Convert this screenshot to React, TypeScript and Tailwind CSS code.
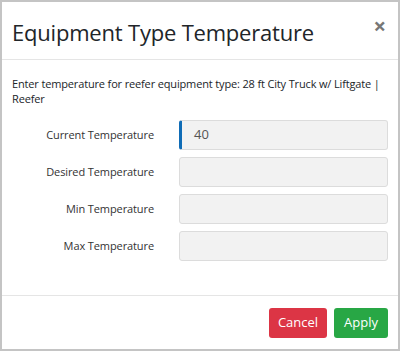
export default function App() {
  const fields = [
    { label: "Current Temperature", value: "40", active: true },
    { label: "Desired Temperature", value: "" },
    { label: "Min Temperature", value: "" },
    { label: "Max Temperature", value: "" },
  ];
  return (
    <div
      className="flex h-[351px] w-[400px] flex-col border-2 border-[#c4c4c4] bg-white text-[#212529]"
      style={{ fontFamily: '"Open Sans", "Noto Sans", sans-serif' }}
    >
      <div className="flex h-[58px] shrink-0 items-start justify-between border-b border-[#e5e5e5] pl-[10px] pr-[12px]">
        <h1 className="mt-[14px] text-[22px] leading-[32px] tracking-[-0.2px]">Equipment Type Temperature</h1>
        <button className="mt-[12px] text-[22px] leading-[22px] font-bold text-[#777]">×</button>
      </div>
      <div className="flex-1 px-[10px] pt-[16px]">
        <p className="text-[11px] leading-[15px] tracking-[-0.15px]">
          Enter temperature for reefer equipment type: 28 ft City Truck w/ Liftgate | Reefer
        </p>
        <div className="mt-[14px] flex flex-col gap-[7px]">
          {fields.map((f) => (
            <div key={f.label} className="flex items-center">
              <label className="w-[142px] shrink-0 text-right text-[11px] tracking-[-0.1px] text-[#333]">{f.label}</label>
              <div
                className={`ml-[25px] flex h-[30px] w-[209px] items-center rounded-[3px] border border-[#dcdcdc] bg-[#f2f2f2] pl-[12px] text-[13px] text-[#555] ${
                  f.active ? "border-l-[3px] border-l-[#0f6cb6]" : ""
                }`}
              >
                {f.value}
              </div>
            </div>
          ))}
        </div>
      </div>
      <div className="flex h-[54px] shrink-0 items-start justify-end gap-[7px] border-t border-[#e5e5e5] pr-[10px] pt-[12px]">
        <button className="h-[30px] w-[58px] rounded-[3px] bg-[#dc3545] text-[13px] text-white">Cancel</button>
        <button className="h-[30px] w-[54px] rounded-[3px] bg-[#28a745] text-[13px] text-white">Apply</button>
      </div>
    </div>
  );
}
